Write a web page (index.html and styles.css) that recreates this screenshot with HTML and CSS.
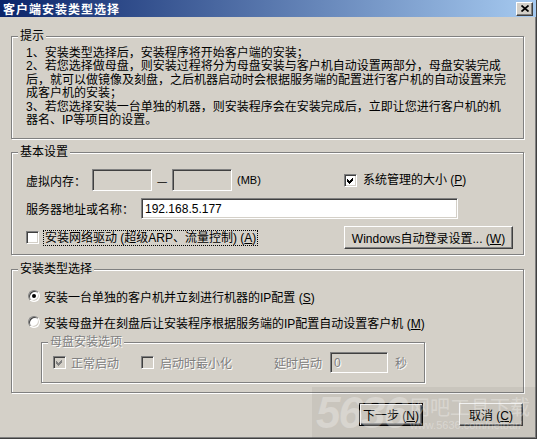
FILE: index.html
```html
<!DOCTYPE html>
<html lang="zh-CN">
<head>
<meta charset="utf-8">
<title>客户端安装类型选择</title>
<link rel="stylesheet" href="styles.css">
</head>
<body>
<div class="window">
  <div class="titlebar">
    <span class="title">客户端安装类型选择</span>
    <button class="close" aria-label="关闭"><svg width="8" height="7" viewBox="0 0 8 7"><path d="M0.5 0.5 L7.5 6.5 M7.5 0.5 L0.5 6.5" stroke="#000" stroke-width="1.7" fill="none"/></svg></button>
  </div>
  <div class="client">
    <div class="group tips">
      <span class="legend">提示</span>
      <p class="tiptext">1、安装类型选择后，安装程序将开始客户端的安装；<br>2、若您选择做母盘，则安装过程将分为母盘安装与客户机自动设置两部分，母盘安装完成<br>后，就可以做镜像及刻盘，之后机器启动时会根据服务端的配置进行客户机的自动设置来完<br>成客户机的安装；<br>3、若您选择安装一台单独的机器，则安装程序会在安装完成后，立即让您进行客户机的机<br>器名、IP等项目的设置。</p>
    </div>

    <div class="group basic">
      <span class="legend">基本设置</span>
      <div class="basic-grid">
        <div class="row">
          <span class="lbl lbl-vm">虚拟内存：</span>
          <span class="edit edit-vm disabled"></span>
          <span class="dash">—</span>
          <span class="edit edit-vm disabled"></span>
          <span class="unit">(MB)</span>
        </div>
        <div class="check">
          <span class="cb"><svg width="9" height="9" viewBox="0 0 9 9"><polygon points="1,3 3,5 7,1 7,4 3,8 1,6" fill="#000"/></svg></span>
          <span class="cb-text">系统管理的大小 (<u>P</u>)</span>
        </div>
        <div class="row span2">
          <span class="lbl lbl-server">服务器地址或名称：</span>
          <span class="edit edit-server">192.168.5.177</span>
        </div>
        <div class="check">
          <span class="cb"></span>
          <span class="cb-text focus">安装网络驱动 (超级ARP、流量控制) (<u>A</u>)</span>
        </div>
        <button class="btn btn-wide">Windows自动登录设置... (<u>W</u>)</button>
      </div>
    </div>

    <div class="group install">
      <span class="legend">安装类型选择</span>
      <div class="radio-row">
        <span class="radio on"></span>
        <span class="radio-text">安装一台单独的客户机并立刻进行机器的IP配置 (<u>S</u>)</span>
      </div>
      <div class="radio-row second">
        <span class="radio"></span>
        <span class="radio-text">安装母盘并在刻盘后让安装程序根据服务端的IP配置自动设置客户机 (<u>M</u>)</span>
      </div>
      <div class="group sub">
        <span class="legend off">母盘安装选项</span>
        <div class="sub-row">
          <span class="cb disabled"><svg width="9" height="9" viewBox="0 0 9 9"><polygon points="1,3 3,5 7,1 7,4 3,8 1,6" fill="#808080"/></svg></span>
          <span class="off t-normal">正常启动</span>
          <span class="cb disabled cb-min"></span>
          <span class="off t-min">启动时最小化</span>
          <span class="off t-delay">延时启动</span>
          <span class="edit edit-delay disabled"><span class="off">0</span></span>
          <span class="off t-sec">秒</span>
        </div>
      </div>
    </div>

    <div class="actions">
      <button class="btn btn-default">下一步 (<u>N</u>)</button>
      <button class="btn">取消 (<u>C</u>)</button>
    </div>
  </div>

  <div class="watermark">
    <span class="wm-num">5636</span>
    <span class="wm-side">
      <span class="wm-cn">网吧工具下载</span>
      <span class="wm-url">www.5636.com/netbar/</span>
    </span>
  </div>
</div>
</body>
</html>
```

FILE: styles.css
```css
* { box-sizing: border-box; }
html, body { margin: 0; padding: 0; }
body {
  width: 537px;
  height: 439px;
  overflow: hidden;
  background: #d4d0c8;
  font-family: "Liberation Sans", "Noto Sans CJK SC", sans-serif;
  font-size: 12px;
  color: #000;
}
u { text-decoration: underline; text-underline-offset: 1px; }

.window {
  position: relative;
  width: 537px;
  height: 439px;
  background: #d4d0c8;
  border-right: 1px solid #404040;
  border-bottom: 1px solid #404040;
  box-shadow: inset -1px -1px #808080;
}

.titlebar {
  height: 17px;
  display: flex;
  align-items: center;
  justify-content: space-between;
  padding: 0 3px 0 3px;
  background: linear-gradient(to right, #0a246a, #a6caf0);
}
.title {
  color: #fff;
  font-weight: bold;
  font-size: 12px;
  letter-spacing: 1px;
  line-height: 17px;
  font-family: "Noto Sans CJK SC", sans-serif;
}
.close {
  width: 17px;
  height: 14px;
  padding: 0;
  margin: 0;
  display: flex;
  align-items: center;
  justify-content: center;
  background: #d4d0c8;
  border: 1px solid;
  border-color: #fff #404040 #404040 #fff;
  box-shadow: inset -1px -1px #808080;
}

.client {
  display: flex;
  flex-direction: column;
  padding-left: 11px;
}

.group {
  position: relative;
  width: 513px;
  border: 1px solid #808080;
  box-shadow: inset 1px 1px #fff, 1px 1px #fff;
}
.legend {
  position: absolute;
  top: -8px;
  left: 6px;
  padding: 0 2px;
  line-height: 14px;
  background: #d4d0c8;
  white-space: nowrap;
}

.tips {
  margin-top: 19px;
  height: 103px;
  padding: 10px 0 0 14px;
}
.tiptext {
  margin: 0;
  line-height: 13.4px;
  white-space: nowrap;
}

.basic {
  margin-top: 13px;
  height: 103px;
  padding: 16px 0 0 14px;
}
.basic-grid {
  display: grid;
  grid-template-columns: 318px 169px;
  grid-template-rows: 22px 21px 23px;
  row-gap: 7px;
  align-items: center;
}
.row { display: flex; align-items: center; height: 100%; }
.span2 { grid-column: 1 / 3; }
.lbl { white-space: nowrap; }
.lbl-vm { width: 66px; }
.lbl-server { width: 115px; }
.dash { width: 20px; text-align: center; font-family: "Noto Sans CJK SC", sans-serif; }
.unit { margin-left: 5px; font-size: 11px; }

.edit {
  display: flex;
  align-items: center;
  height: 100%;
  padding-left: 3px;
  background: #fff;
  border: 1px solid;
  border-color: #808080 #fff #fff #808080;
  box-shadow: inset 1px 1px #404040, inset -1px -1px #d4d0c8;
  white-space: nowrap;
}
.edit.disabled { background: #d4d0c8; }
.edit-vm { width: 60px; }
.edit-server { width: 317px; }
.edit-delay { width: 58px; height: 21px; }

.check { display: flex; align-items: center; white-space: nowrap; }
.cb {
  width: 13px;
  height: 13px;
  flex: none;
  display: flex;
  align-items: center;
  justify-content: center;
  background: #fff;
  border: 1px solid;
  border-color: #808080 #fff #fff #808080;
  box-shadow: inset 1px 1px #404040, inset -1px -1px #d4d0c8;
}
.cb svg { shape-rendering: crispEdges; }
.cb.disabled { background: #d4d0c8; }
.cb-text { margin-left: 5px; padding: 0 1px; line-height: 14px; }
.focus { outline: 1px dotted #000; outline-offset: 0; }

.btn {
  height: 23px;
  padding: 0;
  margin: 0;
  font: inherit;
  color: #000;
  background: #d4d0c8;
  border: 1px solid;
  border-color: #fff #404040 #404040 #fff;
  box-shadow: inset -1px -1px #808080;
  white-space: nowrap;
}
.btn-wide { width: 169px; }

.install {
  margin-top: 14px;
  height: 124px;
  padding: 18px 0 0 14px;
}
.radio-row { display: flex; align-items: center; height: 16px; white-space: nowrap; }
.radio-row.second { margin-top: 10px; }
.radio {
  position: relative;
  width: 12px;
  height: 12px;
  margin-left: 2px;
  flex: none;
  border-radius: 50%;
  background: #fff;
  border: 1px solid;
  border-color: #808080 #fff #fff #808080;
  box-shadow: inset 1px 1px #404040, inset -1px -1px #d4d0c8;
}
.radio.on::after {
  content: "";
  position: absolute;
  left: 3px;
  top: 3px;
  width: 4px;
  height: 4px;
  border-radius: 50%;
  background: #000;
}
.radio-text { margin-left: 4px; }

.sub {
  width: 384px;
  height: 41px;
  margin-top: 12px;
  margin-left: 15px;
  padding: 9px 0 0 11px;
}
.off { color: #808080; text-shadow: 1px 1px 0 #fff; }
.legend.off { left: 6px; }
.sub-row { display: flex; align-items: center; height: 21px; white-space: nowrap; }
.t-normal { margin-left: 5px; }
.cb-min { margin-left: 22px; }
.t-min { margin-left: 6px; }
.t-delay { margin-left: 42px; }
.edit-delay { margin-left: 8px; }
.t-sec { margin-left: 7px; }

.actions {
  display: flex;
  gap: 36px;
  margin-top: 10px;
  padding-left: 348px;
}
.actions .btn { width: 64px; }
.btn-default {
  border: 1px solid #000;
  box-shadow: inset 1px 1px #fff, inset -1px -1px #404040, inset -2px -2px #808080;
}

.watermark {
  position: absolute;
  left: 312px;
  top: 387px;
  width: 224px;
  height: 51px;
  display: flex;
  align-items: center;
  background: rgba(60, 60, 60, 0.07);
  pointer-events: none;
  overflow: hidden;
}
.wm-num {
  margin-left: 4px;
  font-family: "Liberation Sans", sans-serif;
  font-weight: bold;
  font-style: italic;
  font-size: 44px;
  letter-spacing: -2px;
  color: rgba(255, 255, 255, 0.28);
}
.wm-side { display: flex; flex-direction: column; margin-left: 4px; }
.wm-cn {
  font-family: "Noto Sans CJK SC", sans-serif;
  font-size: 20px;
  line-height: 24px;
  color: rgba(255, 255, 255, 0.3);
  white-space: nowrap;
}
.wm-url {
  font-size: 11px;
  color: rgba(255, 255, 255, 0.3);
  white-space: nowrap;
}
```
